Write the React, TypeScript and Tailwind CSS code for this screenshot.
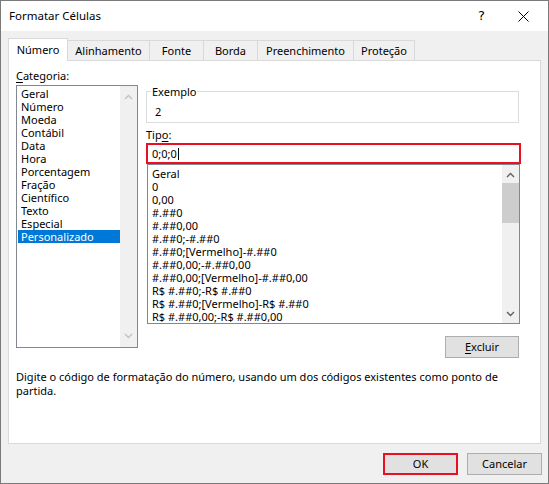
import React from 'react'

const categorias = [
	'Geral',
	'Número',
	'Moeda',
	'Contábil',
	'Data',
	'Hora',
	'Porcentagem',
	'Fração',
	'Científico',
	'Texto',
	'Especial',
	'Personalizado',
]

const tipos = [
	'Geral',
	'0',
	'0,00',
	'#.##0',
	'#.##0,00',
	'#.##0;-#.##0',
	'#.##0;[Vermelho]-#.##0',
	'#.##0,00;-#.##0,00',
	'#.##0,00;[Vermelho]-#.##0,00',
	'R$ #.##0;-R$ #.##0',
	'R$ #.##0;[Vermelho]-R$ #.##0',
	'R$ #.##0,00;-R$ #.##0,00',
]

const tabs = [
	{ label: 'Alinhamento', w: 'w-[83px]' },
	{ label: 'Fonte', w: 'w-[55px]' },
	{ label: 'Borda', w: 'w-[55px]' },
	{ label: 'Preenchimento', w: 'w-[97px]' },
	{ label: 'Proteção', w: 'w-[62px]' },
]

function Chevron({ up, color }: { up?: boolean; color: string }) {
	return (
		<svg width="9" height="6" viewBox="0 0 9 6" className="block">
			<path
				d={up ? 'M1 5 L4.5 1.5 L8 5' : 'M1 1 L4.5 4.5 L8 1'}
				fill="none"
				stroke={color}
				strokeWidth="1.4"
			/>
		</svg>
	)
}

export default function App() {
	return (
		<div className="w-[549px] h-[484px] border border-[#7a7a7a] bg-[#f0f0f0] flex flex-col font-['Noto_Sans',sans-serif] text-[11px] text-black overflow-hidden">
			{/* Title bar */}
			<div className="h-[30px] bg-white flex items-center shrink-0">
				<span className="pl-[8px] text-[11.5px] leading-[16px]">Formatar Células</span>
				<span className="ml-auto mr-[33px] text-[13px] leading-[16px] font-['DejaVu_Sans',sans-serif]">?</span>
				<svg width="11" height="11" viewBox="0 0 11 11" className="mr-[19px]">
					<path d="M0.5 0.5 L10.5 10.5 M10.5 0.5 L0.5 10.5" stroke="#000" strokeWidth="1" />
				</svg>
			</div>

			{/* Body */}
			<div className="flex flex-col px-[7px] pt-[7px]">
				{/* Tabs */}
				<div className="flex items-end h-[22px]">
					<div className="relative z-10 w-[60px] h-[23px] -mb-px bg-white border border-b-0 border-[#d9d9d9] flex items-start justify-center pt-[3px] leading-[16px]">
						Número
					</div>
					{tabs.map((t) => (
						<div
							key={t.label}
							className={`${t.w} h-[20px] -ml-px border border-b-0 border-[#d9d9d9] flex items-center justify-center leading-[16px] first-of-type:ml-0`}
						>
							{t.label}
						</div>
					))}
				</div>

				{/* Panel */}
				<div className="h-[384px] w-[533px] bg-white border border-[#d9d9d9] flex flex-col pl-[7px]">
					<div className="flex gap-[8px]">
						{/* Left column */}
						<div className="flex flex-col pt-[7px]">
							<div className="leading-[16px]">
								<u className="underline-offset-2">C</u>ategoria:
							</div>
							<div className="mt-[1px] w-[122px] h-[263px] border border-[#828790] flex">
								<div className="flex-1 flex flex-col pt-[1px] pl-[1px]">
									{categorias.map((c) => (
										<div
											key={c}
											className={`h-[13px] leading-[13px] pl-[3px] whitespace-nowrap ${
												c === 'Personalizado' ? 'bg-[#0078d7] text-white' : ''
											}`}
										>
											{c}
										</div>
									))}
								</div>
								<div className="w-[17px] bg-[#f0f0f0] flex flex-col items-center justify-between py-[8px]">
									<Chevron up color="#c2c2c2" />
									<Chevron color="#c2c2c2" />
								</div>
							</div>
						</div>

						{/* Right column */}
						<div className="flex flex-col w-[375px]">
							<div className="relative mt-[30px] w-[373px] h-[32px] border border-[#dcdcdc]">
								<span className="absolute -top-[8px] left-[4px] bg-white px-[1px] leading-[16px]">Exemplo</span>
								<div className="pl-[8px] pt-[12px] leading-[16px]">2</div>
							</div>
							<div className="mt-[4px] leading-[16px]">
								Tip<u className="underline-offset-2">o</u>:
							</div>
							<div className="h-[21px] w-[375px] border-2 border-[#e81123] flex items-center pl-[4px]">
								<span className="leading-[16px]">0;0;0</span>
								<span className="w-px h-[12px] bg-black ml-[1px]" />
							</div>
							<div className="ml-px w-[373px] h-[160px] border border-[#828790] flex">
								<div className="flex-1 flex flex-col pt-[2px] pl-[4px]">
									{tipos.map((t) => (
										<div key={t} className="h-[13px] leading-[13px] whitespace-nowrap">
											{t}
										</div>
									))}
								</div>
								<div className="w-[17px] bg-[#f0f0f0] flex flex-col items-center pt-[7px] pb-[6px]">
									<Chevron up color="#606060" />
									<div className="mt-[5px] w-full h-[40px] bg-[#cdcdcd]" />
									<div className="flex-1" />
									<Chevron color="#606060" />
								</div>
							</div>
							<button className="mt-[12px] ml-auto mr-[2px] w-[74px] h-[22px] bg-[#e1e1e1] border border-[#adadad] leading-[16px]">
								<u className="underline-offset-2">E</u>xcluir
							</button>
						</div>
					</div>

					<p className="mt-[12px] leading-[14px] w-[500px]">
						Digite o código de formatação do número, usando um dos códigos existentes como ponto de partida.
					</p>
				</div>
			</div>

			{/* Footer */}
			<div className="flex justify-end gap-[9px] pt-[9px] pr-[6px]">
				<button className="w-[75px] h-[22px] bg-[#e1e1e1] border-2 border-[#e81123] leading-[16px]">OK</button>
				<button className="w-[75px] h-[22px] bg-[#e1e1e1] border border-[#adadad] leading-[16px]">Cancelar</button>
			</div>
		</div>
	)
}
